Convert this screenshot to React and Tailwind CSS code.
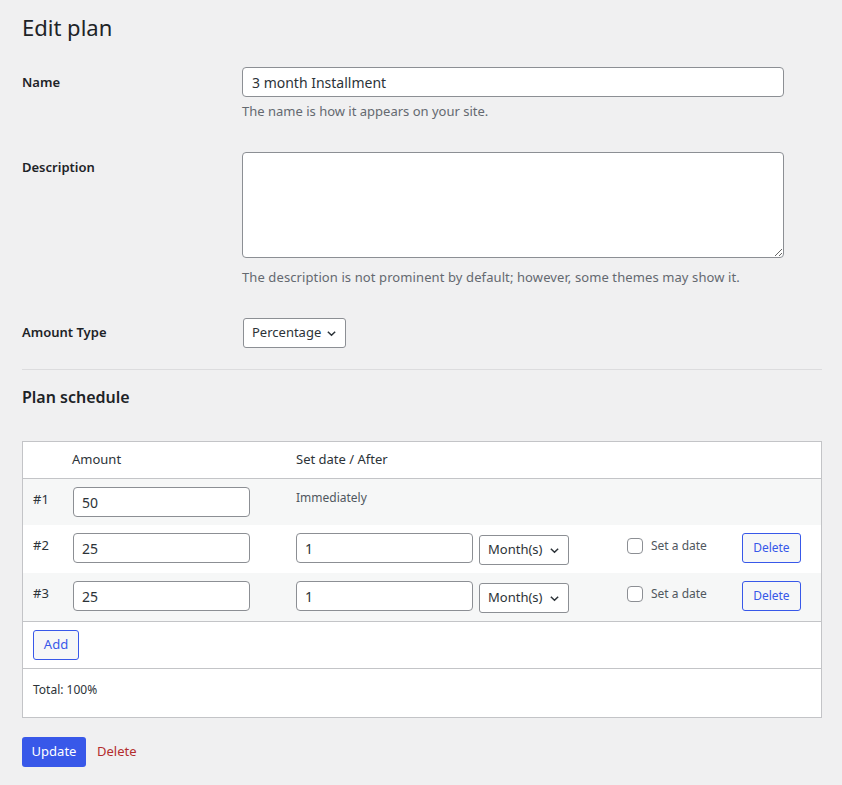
import React from 'react';

const font = { fontFamily: '"Noto Sans", "Open Sans", sans-serif' };

const Chevron = () => (
  <svg width="11" height="11" viewBox="0 0 12 12" className="text-[#2c3338]">
    <polyline points="2,4 6,8 10,4" fill="none" stroke="currentColor" strokeWidth="1.6" />
  </svg>
);

const Select = ({ value, className = '' }) => (
  <div className={`flex items-center justify-between h-[30px] border border-[#8c8f94] rounded-[3px] bg-white pl-2 pr-[8px] text-[13px] text-[#2c3338] ${className}`}>
    <span>{value}</span>
    <Chevron />
  </div>
);

const TextInput = ({ value, className = '' }) => (
  <input
    readOnly
    value={value}
    className={`h-[30px] border border-[#8c8f94] rounded-[4px] bg-white px-2 text-[14px] text-[#2c3338] outline-none ${className}`}
  />
);

const ScheduleRow = ({ index, amount, first, striped }) => (
  <div className={`flex items-start ${first ? 'h-[46px]' : 'h-[48px]'} pt-2 ${striped ? 'bg-[#f6f7f7]' : 'bg-white'}`}>
    <div className="w-[50px] pl-[10px] pt-[3px] text-[13px] text-[#2c3338]">#{index}</div>
    <TextInput value={amount} className="w-[177px]" />
    <div className="w-[46px]" />
    {first ? (
      <div className="pt-[2px] text-[12px] text-[#50575e]">Immediately</div>
    ) : (
      <div className="flex items-start">
        <TextInput value="1" className="w-[177px]" />
        <Select value="Month(s)" className="w-[90px] ml-[6px] mt-[2px]" />
        <label className="flex items-center ml-[58px] mt-[4px] text-[12px] text-[#50575e]">
          <span className="w-4 h-4 border border-[#8c8f94] rounded-[4px] bg-white mr-2" />
          Set a date
        </label>
        <button className="ml-[35px] h-[30px] w-[59px] border border-[#3858e9] rounded-[3px] bg-[#f6f7f7] text-[12px] text-[#3858e9]">
          Delete
        </button>
      </div>
    )}
  </div>
);

export default function App() {
  return (
    <div className="min-h-[785px] bg-[#f0f0f1] text-[#1d2327] pl-[22px] pr-[20px] pt-[12px]" style={font}>
      <h1 className="text-[22px] font-normal leading-[30px] text-[#1d2327]">Edit plan</h1>

      <div className="mt-[25px] flex">
        <div className="w-[220px] pt-[6px] text-[13px] font-semibold">Name</div>
        <div>
          <TextInput value="3 month Installment" className="w-[542px] px-[9px]" />
          <p className="mt-[5px] text-[13px] text-[#646970]">The name is how it appears on your site.</p>
        </div>
      </div>

      <div className="mt-[30px] flex">
        <div className="w-[220px] pt-[6px] text-[13px] font-semibold">Description</div>
        <div>
          <textarea readOnly className="block w-[542px] h-[106px] border border-[#8c8f94] rounded-[4px] bg-white" />
          <p className="mt-[10px] text-[13px] tracking-[0.1px] text-[#646970]">
            The description is not prominent by default; however, some themes may show it.
          </p>
        </div>
      </div>

      <div className="mt-[31px] flex items-center">
        <div className="w-[221px] text-[13px] font-semibold">Amount Type</div>
        <Select value="Percentage" className="w-[103px]" />
      </div>

      <hr className="mt-[21px] border-0 border-t border-[#dcdcde]" />

      <h2 className="mt-[15px] text-[16px] font-semibold text-[#1d2327]">Plan schedule</h2>

      <div className="mt-[32px] border border-[#c3c4c7] bg-white">
        <div className="flex items-center h-[37px] border-b border-[#c3c4c7] text-[13px] text-[#2c3338]">
          <div className="w-[49px]" />
          <div className="w-[224px]">Amount</div>
          <div>Set date / After</div>
        </div>
        <ScheduleRow index={1} amount="50" first striped />
        <ScheduleRow index={2} amount="25" />
        <ScheduleRow index={3} amount="25" striped />
        <div className="h-[47px] border-t border-[#c3c4c7] pl-[10px] pt-[8px]">
          <button className="h-[30px] w-[46px] border border-[#3858e9] rounded-[3px] bg-[#f6f7f7] text-[13px] text-[#3858e9]">
            Add
          </button>
        </div>
        <div className="h-[49px] border-t border-[#c3c4c7] pl-[10px] pt-[12px] text-[12px] text-[#2c3338]">
          Total: 100%
        </div>
      </div>

      <div className="mt-[19px] flex items-center">
        <button className="h-[30px] w-[64px] rounded-[3px] bg-[#3858e9] text-[13px] text-white">Update</button>
        <span className="ml-[11px] text-[13px] text-[#b32d2e]">Delete</span>
      </div>
    </div>
  );
}
